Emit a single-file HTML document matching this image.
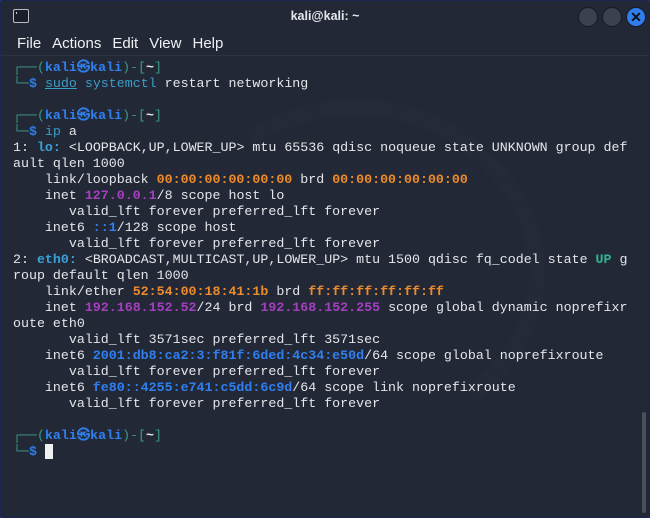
<!DOCTYPE html>
<html><head><style>
html,body{margin:0;padding:0;}
body{width:650px;height:518px;background:#2a3b6a;overflow:hidden;position:relative;font-family:"Liberation Sans",sans-serif;}
.win{position:absolute;left:0;top:0;width:648px;height:516px;background:#232836;border:1px solid #1a2550;border-radius:3px;overflow:hidden;}
.title{position:absolute;left:0;top:0;width:648px;height:30px;color:#e6e8ee;font-size:12.5px;font-weight:bold;text-align:center;line-height:30px;}
.ticon{position:absolute;left:12px;top:8px;width:14px;height:12px;border:1px solid #b8bcc6;border-radius:2px;background:#1b1e28;}
.ticon:after{content:"";position:absolute;left:2px;top:2px;width:3px;height:2px;border-left:1px solid #ccc;}
.btn{position:absolute;top:6px;width:18px;height:18px;border-radius:50%;background:#3b4150;border:1px solid #161a24;}
.menu{position:absolute;left:16px;top:34px;font-size:15px;color:#eef0f4;}
.menu span{margin-right:11px}
.sep{position:absolute;left:0;top:54px;width:648px;height:1px;background:#2e3342;}
pre{position:absolute;left:12px;top:59px;margin:0;font-family:"Liberation Mono","DejaVu Sans Mono",monospace;font-size:13.3px;line-height:16px;color:#e4e6ea;}
.g{color:#3a9a86}.b{color:#2f80ec;font-weight:bold}.c{color:#3a9dc8}.cb{color:#3aa0d8;font-weight:bold}
.o{color:#ec8b2c;font-weight:bold}.p{color:#a43fc0;font-weight:bold}.bl{color:#2f7ff0;font-weight:bold}.up{color:#2fb890;font-weight:bold}
.cur{background:#f0f0f0;color:#f0f0f0}
.sb{position:absolute;left:641px;top:411px;width:4px;height:101px;background:#4a4f5c;border-radius:2px;}
</style></head><body>
<div class="win">
<svg style="position:absolute;left:0;top:55px" width="648" height="460"><path d="M250 80 C 360 20, 470 60, 520 150 C 560 230, 520 300, 470 340" stroke="#252a39" stroke-width="16" fill="none"/></svg>
<div class="title">kali@kali: ~</div>
<div class="ticon"></div>
<div class="btn" style="left:577px"></div>
<div class="btn" style="left:601px"></div>
<div class="btn" style="left:625px;background:#2e7ef0;color:#111;font-size:14px;line-height:18px;text-align:center;font-weight:bold">✕</div>
<div class="menu"><span>File</span><span>Actions</span><span>Edit</span><span>View</span><span>Help</span></div>
<div class="sep"></div>
<pre><span class="g">┌──(</span><span class="b">kali㉿kali</span><span class="g">)-[</span><b>~</b><span class="g">]</span>
<span class="g">└─</span><span class="b">$</span> <span class="c" style="text-decoration:underline">sudo</span><span class="c"> systemctl</span> restart networking

<span class="g">┌──(</span><span class="b">kali㉿kali</span><span class="g">)-[</span><b>~</b><span class="g">]</span>
<span class="g">└─</span><span class="b">$</span> <span class="c">ip</span> a
1: <span class="cb">lo:</span> &lt;LOOPBACK,UP,LOWER_UP&gt; mtu 65536 qdisc noqueue state UNKNOWN group def
ault qlen 1000
    link/loopback <span class="o">00:00:00:00:00:00</span> brd <span class="o">00:00:00:00:00:00</span>
    inet <span class="p">127.0.0.1</span>/8 scope host lo
       valid_lft forever preferred_lft forever
    inet6 <span class="bl">::1</span>/128 scope host
       valid_lft forever preferred_lft forever
2: <span class="cb">eth0:</span> &lt;BROADCAST,MULTICAST,UP,LOWER_UP&gt; mtu 1500 qdisc fq_codel state <span class="up">UP</span> g
roup default qlen 1000
    link/ether <span class="o">52:54:00:18:41:1b</span> brd <span class="o">ff:ff:ff:ff:ff:ff</span>
    inet <span class="p">192.168.152.52</span>/24 brd <span class="p">192.168.152.255</span> scope global dynamic noprefixr
oute eth0
       valid_lft 3571sec preferred_lft 3571sec
    inet6 <span class="bl">2001:db8:ca2:3:f81f:6ded:4c34:e50d</span>/64 scope global noprefixroute
       valid_lft forever preferred_lft forever
    inet6 <span class="bl">fe80::4255:e741:c5dd:6c9d</span>/64 scope link noprefixroute
       valid_lft forever preferred_lft forever

<span class="g">┌──(</span><span class="b">kali㉿kali</span><span class="g">)-[</span><b>~</b><span class="g">]</span>
<span class="g">└─</span><span class="b">$</span> <span class="cur">_</span></pre>
<div class="sb"></div>
</div>
</body></html>
